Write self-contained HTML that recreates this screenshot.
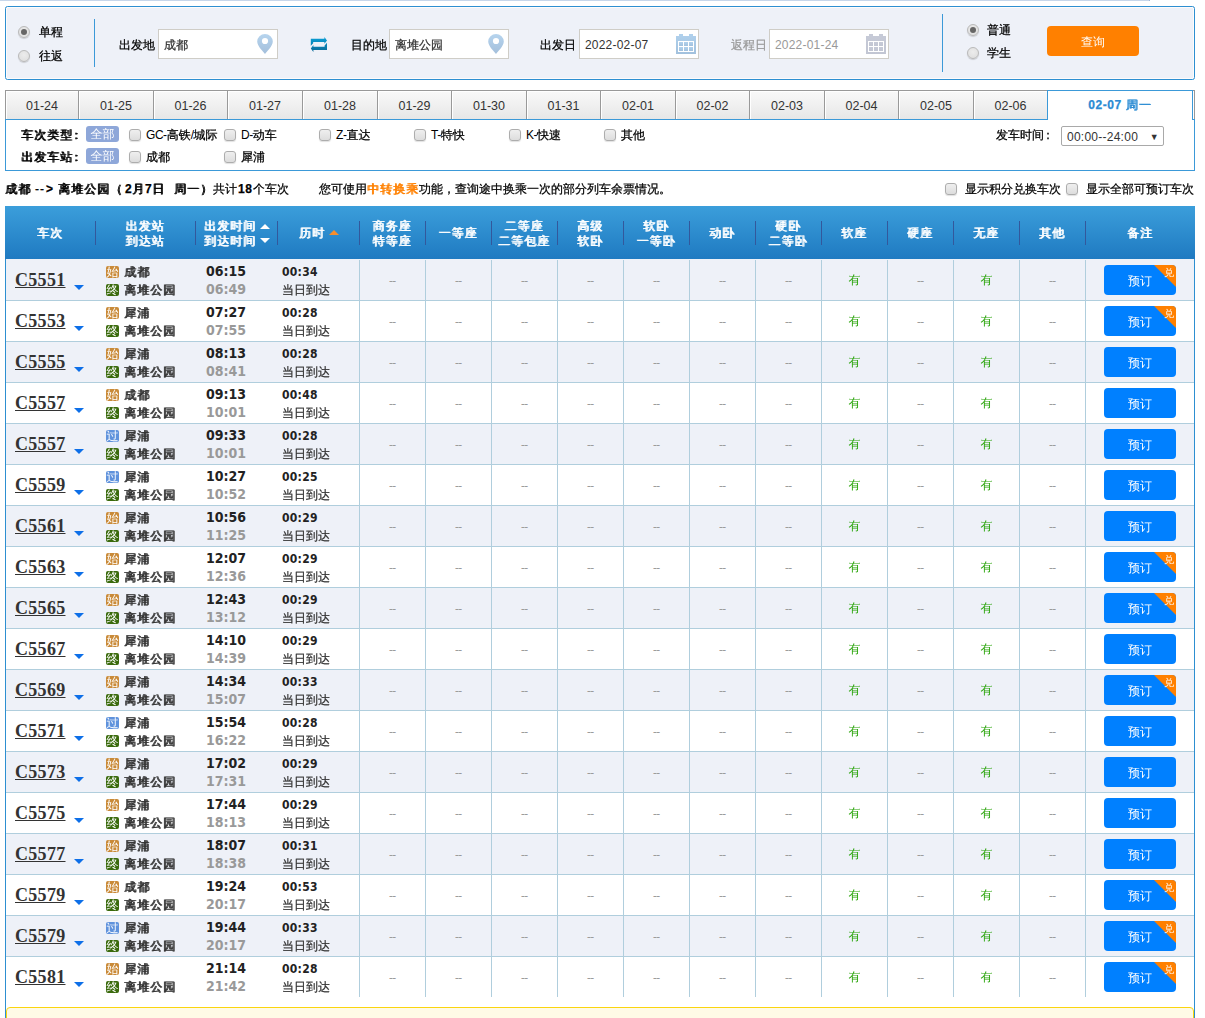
<!DOCTYPE html>
<html lang="zh-CN">
<head>
<meta charset="utf-8">
<title>车票预订</title>
<style>
*{box-sizing:border-box}
html,body{margin:0;padding:0;background:#fff}
body{width:1205px;height:1018px;overflow:hidden;position:relative;font:12px/18px "Liberation Sans","WenQuanYi Zen Hei","Noto Sans CJK SC",sans-serif;color:#000;-webkit-text-stroke:0.25px}
b,.b{font-weight:bold}
.k{font-weight:normal;text-shadow:1px 0 0 currentColor;letter-spacing:1px}
.abs{position:absolute}
.lt{letter-spacing:-.45px;-webkit-text-stroke:0}
#topstrip{left:0;top:0;width:1150px;height:1px;background:#c6d6ea;border-right:1px solid #9fb8d8}
#sbox{left:5px;top:6px;width:1190px;height:74px;border:1px solid #2d8fd1;border-radius:2.5px;background:#eef1f8;box-shadow:inset 0 0 0 1px #fdfbfb}
.vline{width:1px;background:#3b99d8}
.radio{width:12px;height:12px;border-radius:50%;border:1px solid #b9b9b9;background:radial-gradient(circle at 50% 40%,#ececec 0,#dcdcdc 100%);box-shadow:0 1px 1px rgba(0,0,0,.15)}
.radio.on::after{content:"";position:absolute;left:2px;top:2px;width:6px;height:6px;border-radius:50%;background:#666}
.inp{height:30px;width:120px;border:1px solid #cfcdc7;background:#fff;padding:0 0 0 5px;line-height:30px;color:#333}
.inp.dis{color:#999}
.lab{line-height:18px;white-space:nowrap}
#qbtn{left:1047px;top:26px;width:92px;height:30px;border-radius:4px;background:#ff8000;color:#fff;text-align:center;line-height:32px;-webkit-text-stroke:0}
.tab{top:90px;height:30px;border:1px solid #999;border-right:none;background:linear-gradient(#f9f9f9,#e7e7e7);box-shadow:inset 1px 1px 0 #fff;text-align:center;line-height:31px;font-size:12.5px;color:#333;-webkit-text-stroke:0}
#tabact{left:1047px;top:90px;width:146px;height:30px;border:1px solid #3b99d8;border-bottom:none;background:#fff;text-align:center;line-height:28px;color:#2a8bd3;text-shadow:1px 0 0 currentColor;letter-spacing:1px}
#panel{left:5px;top:119px;width:1190px;height:52px;border:1px solid #3b99d8;background:#fff}
.badge{width:33px;height:16px;border-radius:3px;background:#8ea7d9;color:#fff;text-align:center;line-height:16px;-webkit-text-stroke:0}
.cb{width:12px;height:12px;border-radius:3px;border:1px solid #adadad;background:linear-gradient(#efefef,#dddddd);box-shadow:0 1px 1px rgba(0,0,0,.12)}
.sel{left:1061px;top:126px;width:103px;height:20px;border:1px solid #a9a9a9;border-radius:2px;background:#fff;line-height:20px;padding-left:5px;color:#333;-webkit-text-stroke:0;letter-spacing:.25px}
#wrap{left:5px;top:206px;width:1190px;height:820px;border-left:1px solid #2d8fd1;border-right:1px solid #2d8fd1}
#thead{left:5px;top:206px;width:1190px;height:53px;background:linear-gradient(#3b9edb,#1f7ac1);color:#fff}
.th{position:absolute;top:1px;height:53px;display:flex;align-items:center;justify-content:center;text-align:center;line-height:15px;text-shadow:1px 0 0 currentColor;letter-spacing:1px;color:#fff}
.sep{position:absolute;top:15px;width:1px;height:24px;background:#33589c}
.up,.dn{position:absolute;width:0;height:0;border-left:5px solid transparent;border-right:5px solid transparent}
.up{border-bottom:5px solid #fff}.dn{border-top:5px solid #fff}
.row{position:absolute;left:6px;width:1188px;height:41px;border-bottom:1px solid #b0cedd}
.row.odd{background:#eef1f8}
.row.last{border-bottom:none;height:40px}
.cell{position:absolute;top:0;height:40px;width:66px;border-left:1px solid #b0cedd;text-align:center;line-height:42px;color:#999;font-size:10px}
.cell.yes{color:#26a306;font-size:12px;line-height:40px;-webkit-text-stroke:0}
.tn{position:absolute;left:9px;top:8px;letter-spacing:.3px;font:bold 18px/24px "Liberation Serif",serif;color:#333;text-decoration:underline;-webkit-text-stroke:0}
.tri{position:absolute;left:68px;top:25px;width:0;height:0;border-left:5px solid transparent;border-right:5px solid transparent;border-top:5px solid #0d6fe8}
.sb{position:absolute;left:100px;width:13px;height:12px;border-radius:2px;color:#fff;font-size:12px;line-height:12px;text-align:center;overflow:hidden;-webkit-text-stroke:0}
.sb.s{background:#c98a38}.sb.z{background:#3a6a0c}.sb.g{background:#5f92dc}
.sn{position:absolute;left:118px;text-shadow:1px 0 0 currentColor;letter-spacing:1px;line-height:18px;color:#333;white-space:nowrap}
.t1,.t2{position:absolute;left:200px;font:bold 14px/18px "DejaVu Sans Condensed","DejaVu Sans","Liberation Sans",sans-serif;color:#222;-webkit-text-stroke:0}
.t1{top:2px}.t2{top:20px;color:#999}
.d1{position:absolute;left:276px;top:3px;letter-spacing:.3px;font:bold 12px/18px "DejaVu Sans Condensed","DejaVu Sans","Liberation Sans",sans-serif;color:#222;-webkit-text-stroke:0}
.d2{position:absolute;left:276px;top:21px;line-height:18px;color:#333}
.bk{position:absolute;left:1098px;top:5px;width:72px;height:30px;border-radius:4px;background:#0080ff;color:#fff;text-align:center;line-height:33px;overflow:hidden;-webkit-text-stroke:0}
.bk i{position:absolute;right:0;top:0;width:0;height:0;border-top:22px solid #ff8000;border-left:22px solid transparent}
.bk em{position:absolute;right:2px;top:2px;font-style:normal;font-size:10px;line-height:11px;color:#fff}
#ybox{left:6px;top:1007px;width:1188px;height:40px;border:1px solid #fad50f;border-radius:4px;background:#fffae6}
</style>
</head>
<body>
<div id="topstrip" class="abs"></div>
<div id="sbox" class="abs"></div>
<div class="abs radio on" style="left:18px;top:26px"></div>
<div class="abs radio" style="left:18px;top:50px"></div>
<div class="abs lab" style="left:39px;top:23px">单程</div>
<div class="abs lab" style="left:39px;top:47px">往返</div>
<div class="abs vline" style="left:94px;top:19px;height:48px"></div>
<div class="abs lab" style="left:119px;top:36px">出发地</div>
<div class="abs inp" style="left:158px;top:29px">成都</div>
<div class="abs lab" style="left:351px;top:36px">目的地</div>
<div class="abs inp" style="left:389px;top:29px">离堆公园</div>
<div class="abs lab" style="left:540px;top:36px">出发日</div>
<div class="abs inp" style="left:579px;top:29px;-webkit-text-stroke:0;letter-spacing:.2px">2022-02-07</div>
<div class="abs lab" style="left:731px;top:36px;color:#999">返程日</div>
<div class="abs inp dis" style="left:769px;top:29px;-webkit-text-stroke:0;letter-spacing:.2px">2022-01-24</div>
<svg class="abs" style="left:257px;top:34px" width="16" height="20" viewBox="0 0 16 20"><defs><linearGradient id="pg1" x1="0" y1="0" x2="0" y2="1"><stop offset="0" stop-color="#b6d4ee"/><stop offset="1" stop-color="#a4bfdb"/></linearGradient></defs><path fill="url(#pg1)" fill-rule="evenodd" d="M8 20 C6.5 18 0.2 12.2 0.2 7.6 A7.8 7.6 0 0 1 15.8 7.6 C15.8 12.2 9.5 18 8 20 Z M8 3.9 A3.1 3.1 0 1 0 8 10.1 A3.1 3.1 0 1 0 8 3.9 Z"/></svg>
<svg class="abs" style="left:488px;top:34px" width="16" height="20" viewBox="0 0 16 20"><defs><linearGradient id="pg2" x1="0" y1="0" x2="0" y2="1"><stop offset="0" stop-color="#b6d4ee"/><stop offset="1" stop-color="#a4bfdb"/></linearGradient></defs><path fill="url(#pg2)" fill-rule="evenodd" d="M8 20 C6.5 18 0.2 12.2 0.2 7.6 A7.8 7.6 0 0 1 15.8 7.6 C15.8 12.2 9.5 18 8 20 Z M8 3.9 A3.1 3.1 0 1 0 8 10.1 A3.1 3.1 0 1 0 8 3.9 Z"/></svg>
<svg class="abs" style="left:310px;top:37px" width="18" height="15" viewBox="0 0 18 15"><defs><linearGradient id="sg" x1="0" y1="0" x2="0" y2="1"><stop offset="0" stop-color="#0aa0d8"/><stop offset="1" stop-color="#0a6996"/></linearGradient></defs><path fill="url(#sg)" d="M0.8 8.8 L0.8 1.8 L14.4 1.8 L14.4 0 L17 3.4 L14.4 6.8 L14.4 5 L3.2 5 L3.2 6.2 Z M17 5.8 L17 12.9 L3.4 12.9 L3.4 15 L0.8 11.4 L3.4 7.9 L3.4 9.8 L14.6 9.8 L14.6 8.4 Z"/></svg>
<svg class="abs" style="left:676px;top:34px" width="20" height="20" viewBox="0 0 20 20"><defs><linearGradient id="cg1" x1="0" y1="0" x2="0" y2="1"><stop offset="0" stop-color="#b0d1ed"/><stop offset="1" stop-color="#a2c1dd"/></linearGradient></defs><g fill="url(#cg1)"><path fill-rule="evenodd" d="M0 2 H3 V0 H7 V2 H13 V0 H17 V2 H20 V20 H0 Z M2 7 V18 H18 V7 Z"/><rect x="3" y="8" width="4" height="4"/><rect x="8" y="8" width="4" height="4"/><rect x="13" y="8" width="4" height="4"/><rect x="3" y="13" width="4" height="4"/><rect x="8" y="13" width="4" height="4"/><rect x="13" y="13" width="4" height="4"/></g></svg>
<svg class="abs" style="left:866px;top:34px" width="20" height="20" viewBox="0 0 20 20"><defs><linearGradient id="cg2" x1="0" y1="0" x2="0" y2="1"><stop offset="0" stop-color="#c6cad7"/><stop offset="1" stop-color="#c2c6d3"/></linearGradient></defs><g fill="url(#cg2)"><path fill-rule="evenodd" d="M0 2 H3 V0 H7 V2 H13 V0 H17 V2 H20 V20 H0 Z M2 7 V18 H18 V7 Z"/><rect x="3" y="8" width="4" height="4"/><rect x="8" y="8" width="4" height="4"/><rect x="13" y="8" width="4" height="4"/><rect x="3" y="13" width="4" height="4"/><rect x="8" y="13" width="4" height="4"/><rect x="13" y="13" width="4" height="4"/></g></svg>
<div class="abs vline" style="left:942px;top:14px;height:58px"></div>
<div class="abs radio on" style="left:967px;top:24px"></div>
<div class="abs radio" style="left:967px;top:47px"></div>
<div class="abs lab" style="left:987px;top:21px">普通</div>
<div class="abs lab" style="left:987px;top:44px">学生</div>
<div id="qbtn" class="abs">查询</div>
<div class="abs tab" style="left:5px;width:73px">01-24</div>
<div class="abs tab" style="left:78px;width:75px">01-25</div>
<div class="abs tab" style="left:153px;width:74px">01-26</div>
<div class="abs tab" style="left:227px;width:75px">01-27</div>
<div class="abs tab" style="left:302px;width:75px">01-28</div>
<div class="abs tab" style="left:377px;width:74px">01-29</div>
<div class="abs tab" style="left:451px;width:75px">01-30</div>
<div class="abs tab" style="left:526px;width:74px">01-31</div>
<div class="abs tab" style="left:600px;width:75px">02-01</div>
<div class="abs tab" style="left:675px;width:74px">02-02</div>
<div class="abs tab" style="left:749px;width:75px">02-03</div>
<div class="abs tab" style="left:824px;width:74px">02-04</div>
<div class="abs tab" style="left:898px;width:75px">02-05</div>
<div class="abs tab" style="left:973px;width:74px">02-06</div>
<div id="panel" class="abs"></div>
<div id="tabact" class="abs"><b style="text-shadow:none;letter-spacing:.6px">02-07 </b>周一</div>
<div class="abs" style="left:1193px;top:90px;width:2px;height:29px;border-top:1px solid #999;border-right:1px solid #999"></div>
<div class="abs lab k" style="left:21px;top:126px">车次类型<span style="margin-left:-3px">：</span></div>
<div class="abs lab k" style="left:21px;top:148px">出发车站<span style="margin-left:-3px">：</span></div>
<div class="abs badge" style="left:86px;top:126px">全部</div>
<div class="abs badge" style="left:86px;top:148px">全部</div>
<div class="abs cb" style="left:129px;top:129px"></div><div class="abs lab" style="left:146px;top:126px"><span class="lt">GC-</span>高铁<span class="lt">/</span>城际</div>
<div class="abs cb" style="left:224px;top:129px"></div><div class="abs lab" style="left:241px;top:126px"><span class="lt">D-</span>动车</div>
<div class="abs cb" style="left:319px;top:129px"></div><div class="abs lab" style="left:336px;top:126px"><span class="lt">Z-</span>直达</div>
<div class="abs cb" style="left:414px;top:129px"></div><div class="abs lab" style="left:431px;top:126px"><span class="lt">T-</span>特快</div>
<div class="abs cb" style="left:509px;top:129px"></div><div class="abs lab" style="left:526px;top:126px"><span class="lt">K-</span>快速</div>
<div class="abs cb" style="left:604px;top:129px"></div><div class="abs lab" style="left:621px;top:126px">其他</div>
<div class="abs cb" style="left:129px;top:151px"></div><div class="abs lab" style="left:146px;top:148px">成都</div>
<div class="abs cb" style="left:224px;top:151px"></div><div class="abs lab" style="left:241px;top:148px">犀浦</div>
<div class="abs lab" style="left:996px;top:126px">发车时间<span style="margin-left:-2px">：</span></div>
<div class="abs sel">00:00--24:00<span style="position:absolute;right:4px;top:0;font-size:9px">▼</span></div>
<div class="abs lab" style="left:0;top:180px;width:300px;height:18px"><span class="abs k" style="left:5px">成都</span><span class="abs" style="left:35px;letter-spacing:1px">--</span><b class="abs" style="left:46px">&gt;</b><span class="abs k" style="left:58px">离堆公园（</span><b class="abs" style="left:125px">2</b><span class="abs k" style="left:132px">月</span><b class="abs" style="left:145px">7</b><span class="abs k" style="left:152px">日</span><span class="abs k" style="left:174px">周一）</span><span class="abs" style="left:213px">共计</span><b class="abs" style="left:238px;letter-spacing:.5px">18</b><span class="abs" style="left:253px">个车次</span></div>
<div class="abs lab" style="left:319px;top:180px">您可使用<span class="k" style="color:#ff8000">中转换乘</span>功能，查询途中换乘一次的部分列车余票情况。</div>
<div class="abs cb" style="left:945px;top:183px"></div><div class="abs lab" style="left:965px;top:180px">显示积分兑换车次</div>
<div class="abs cb" style="left:1066px;top:183px"></div><div class="abs lab" style="left:1086px;top:180px">显示全部可预订车次</div>
<div id="wrap" class="abs"></div>
<div class="abs" style="left:6px;top:259px;width:1188px;height:1px;background:#eef1f8"></div>
<div id="thead" class="abs"><div class="th" style="left:0px;width:90px"><span>车次</span></div><div class="th" style="left:90px;width:100px"><span>出发站<br>到达站</span></div><div class="sep" style="left:90px"></div><div class="sep" style="left:190px"></div><div class="sep" style="left:272px"></div><div class="th" style="left:354px;width:66px"><span>商务座<br>特等座</span></div><div class="sep" style="left:354px"></div><div class="th" style="left:420px;width:66px"><span>一等座</span></div><div class="sep" style="left:420px"></div><div class="th" style="left:486px;width:66px"><span>二等座<br>二等包座</span></div><div class="sep" style="left:486px"></div><div class="th" style="left:552px;width:66px"><span>高级<br>软卧</span></div><div class="sep" style="left:552px"></div><div class="th" style="left:618px;width:66px"><span>软卧<br>一等卧</span></div><div class="sep" style="left:618px"></div><div class="th" style="left:684px;width:66px"><span>动卧</span></div><div class="sep" style="left:684px"></div><div class="th" style="left:750px;width:66px"><span>硬卧<br>二等卧</span></div><div class="sep" style="left:750px"></div><div class="th" style="left:816px;width:66px"><span>软座</span></div><div class="sep" style="left:816px"></div><div class="th" style="left:882px;width:66px"><span>硬座</span></div><div class="sep" style="left:882px"></div><div class="th" style="left:948px;width:66px"><span>无座</span></div><div class="sep" style="left:948px"></div><div class="th" style="left:1014px;width:66px"><span>其他</span></div><div class="sep" style="left:1014px"></div><div class="th" style="left:1080px;width:110px"><span>备注</span></div><div class="sep" style="left:1080px"></div><div class="th" style="left:199px;width:53px;justify-content:flex-start;text-align:left"><span>出发时间<br>到达时间</span></div><span class="up" style="left:255px;top:18px"></span><span class="dn" style="left:255px;top:32px"></span><div class="th" style="left:294px;width:30px;justify-content:flex-start"><span>历时</span></div><span class="up" style="left:324px;top:24px;border-bottom-color:#f78d2b"></span></div>
<div class="row odd" style="top:260px"><span class="tn">C5551</span><span class="tri"></span><span class="sb s" style="top:6px">始</span><span class="sn" style="top:3px">成都</span><span class="sb z" style="top:24px">终</span><span class="sn" style="top:21px">离堆公园</span><span class="t1">06:15</span><span class="t2">06:49</span><span class="d1">00:34</span><span class="d2">当日到达</span><span class="cell" style="left:353px">--</span><span class="cell" style="left:419px">--</span><span class="cell" style="left:485px">--</span><span class="cell" style="left:551px">--</span><span class="cell" style="left:617px">--</span><span class="cell" style="left:683px">--</span><span class="cell" style="left:749px">--</span><span class="cell yes" style="left:815px">有</span><span class="cell" style="left:881px">--</span><span class="cell yes" style="left:947px">有</span><span class="cell" style="left:1013px">--</span><span class="cell" style="left:1079px;width:1px"></span><span class="bk">预订<i></i><em>兑</em></span></div>
<div class="row" style="top:301px"><span class="tn">C5553</span><span class="tri"></span><span class="sb s" style="top:6px">始</span><span class="sn" style="top:3px">犀浦</span><span class="sb z" style="top:24px">终</span><span class="sn" style="top:21px">离堆公园</span><span class="t1">07:27</span><span class="t2">07:55</span><span class="d1">00:28</span><span class="d2">当日到达</span><span class="cell" style="left:353px">--</span><span class="cell" style="left:419px">--</span><span class="cell" style="left:485px">--</span><span class="cell" style="left:551px">--</span><span class="cell" style="left:617px">--</span><span class="cell" style="left:683px">--</span><span class="cell" style="left:749px">--</span><span class="cell yes" style="left:815px">有</span><span class="cell" style="left:881px">--</span><span class="cell yes" style="left:947px">有</span><span class="cell" style="left:1013px">--</span><span class="cell" style="left:1079px;width:1px"></span><span class="bk">预订<i></i><em>兑</em></span></div>
<div class="row odd" style="top:342px"><span class="tn">C5555</span><span class="tri"></span><span class="sb s" style="top:6px">始</span><span class="sn" style="top:3px">犀浦</span><span class="sb z" style="top:24px">终</span><span class="sn" style="top:21px">离堆公园</span><span class="t1">08:13</span><span class="t2">08:41</span><span class="d1">00:28</span><span class="d2">当日到达</span><span class="cell" style="left:353px">--</span><span class="cell" style="left:419px">--</span><span class="cell" style="left:485px">--</span><span class="cell" style="left:551px">--</span><span class="cell" style="left:617px">--</span><span class="cell" style="left:683px">--</span><span class="cell" style="left:749px">--</span><span class="cell yes" style="left:815px">有</span><span class="cell" style="left:881px">--</span><span class="cell yes" style="left:947px">有</span><span class="cell" style="left:1013px">--</span><span class="cell" style="left:1079px;width:1px"></span><span class="bk">预订</span></div>
<div class="row" style="top:383px"><span class="tn">C5557</span><span class="tri"></span><span class="sb s" style="top:6px">始</span><span class="sn" style="top:3px">成都</span><span class="sb z" style="top:24px">终</span><span class="sn" style="top:21px">离堆公园</span><span class="t1">09:13</span><span class="t2">10:01</span><span class="d1">00:48</span><span class="d2">当日到达</span><span class="cell" style="left:353px">--</span><span class="cell" style="left:419px">--</span><span class="cell" style="left:485px">--</span><span class="cell" style="left:551px">--</span><span class="cell" style="left:617px">--</span><span class="cell" style="left:683px">--</span><span class="cell" style="left:749px">--</span><span class="cell yes" style="left:815px">有</span><span class="cell" style="left:881px">--</span><span class="cell yes" style="left:947px">有</span><span class="cell" style="left:1013px">--</span><span class="cell" style="left:1079px;width:1px"></span><span class="bk">预订</span></div>
<div class="row odd" style="top:424px"><span class="tn">C5557</span><span class="tri"></span><span class="sb g" style="top:6px">过</span><span class="sn" style="top:3px">犀浦</span><span class="sb z" style="top:24px">终</span><span class="sn" style="top:21px">离堆公园</span><span class="t1">09:33</span><span class="t2">10:01</span><span class="d1">00:28</span><span class="d2">当日到达</span><span class="cell" style="left:353px">--</span><span class="cell" style="left:419px">--</span><span class="cell" style="left:485px">--</span><span class="cell" style="left:551px">--</span><span class="cell" style="left:617px">--</span><span class="cell" style="left:683px">--</span><span class="cell" style="left:749px">--</span><span class="cell yes" style="left:815px">有</span><span class="cell" style="left:881px">--</span><span class="cell yes" style="left:947px">有</span><span class="cell" style="left:1013px">--</span><span class="cell" style="left:1079px;width:1px"></span><span class="bk">预订</span></div>
<div class="row" style="top:465px"><span class="tn">C5559</span><span class="tri"></span><span class="sb g" style="top:6px">过</span><span class="sn" style="top:3px">犀浦</span><span class="sb z" style="top:24px">终</span><span class="sn" style="top:21px">离堆公园</span><span class="t1">10:27</span><span class="t2">10:52</span><span class="d1">00:25</span><span class="d2">当日到达</span><span class="cell" style="left:353px">--</span><span class="cell" style="left:419px">--</span><span class="cell" style="left:485px">--</span><span class="cell" style="left:551px">--</span><span class="cell" style="left:617px">--</span><span class="cell" style="left:683px">--</span><span class="cell" style="left:749px">--</span><span class="cell yes" style="left:815px">有</span><span class="cell" style="left:881px">--</span><span class="cell yes" style="left:947px">有</span><span class="cell" style="left:1013px">--</span><span class="cell" style="left:1079px;width:1px"></span><span class="bk">预订</span></div>
<div class="row odd" style="top:506px"><span class="tn">C5561</span><span class="tri"></span><span class="sb s" style="top:6px">始</span><span class="sn" style="top:3px">犀浦</span><span class="sb z" style="top:24px">终</span><span class="sn" style="top:21px">离堆公园</span><span class="t1">10:56</span><span class="t2">11:25</span><span class="d1">00:29</span><span class="d2">当日到达</span><span class="cell" style="left:353px">--</span><span class="cell" style="left:419px">--</span><span class="cell" style="left:485px">--</span><span class="cell" style="left:551px">--</span><span class="cell" style="left:617px">--</span><span class="cell" style="left:683px">--</span><span class="cell" style="left:749px">--</span><span class="cell yes" style="left:815px">有</span><span class="cell" style="left:881px">--</span><span class="cell yes" style="left:947px">有</span><span class="cell" style="left:1013px">--</span><span class="cell" style="left:1079px;width:1px"></span><span class="bk">预订</span></div>
<div class="row" style="top:547px"><span class="tn">C5563</span><span class="tri"></span><span class="sb s" style="top:6px">始</span><span class="sn" style="top:3px">犀浦</span><span class="sb z" style="top:24px">终</span><span class="sn" style="top:21px">离堆公园</span><span class="t1">12:07</span><span class="t2">12:36</span><span class="d1">00:29</span><span class="d2">当日到达</span><span class="cell" style="left:353px">--</span><span class="cell" style="left:419px">--</span><span class="cell" style="left:485px">--</span><span class="cell" style="left:551px">--</span><span class="cell" style="left:617px">--</span><span class="cell" style="left:683px">--</span><span class="cell" style="left:749px">--</span><span class="cell yes" style="left:815px">有</span><span class="cell" style="left:881px">--</span><span class="cell yes" style="left:947px">有</span><span class="cell" style="left:1013px">--</span><span class="cell" style="left:1079px;width:1px"></span><span class="bk">预订<i></i><em>兑</em></span></div>
<div class="row odd" style="top:588px"><span class="tn">C5565</span><span class="tri"></span><span class="sb s" style="top:6px">始</span><span class="sn" style="top:3px">犀浦</span><span class="sb z" style="top:24px">终</span><span class="sn" style="top:21px">离堆公园</span><span class="t1">12:43</span><span class="t2">13:12</span><span class="d1">00:29</span><span class="d2">当日到达</span><span class="cell" style="left:353px">--</span><span class="cell" style="left:419px">--</span><span class="cell" style="left:485px">--</span><span class="cell" style="left:551px">--</span><span class="cell" style="left:617px">--</span><span class="cell" style="left:683px">--</span><span class="cell" style="left:749px">--</span><span class="cell yes" style="left:815px">有</span><span class="cell" style="left:881px">--</span><span class="cell yes" style="left:947px">有</span><span class="cell" style="left:1013px">--</span><span class="cell" style="left:1079px;width:1px"></span><span class="bk">预订<i></i><em>兑</em></span></div>
<div class="row" style="top:629px"><span class="tn">C5567</span><span class="tri"></span><span class="sb s" style="top:6px">始</span><span class="sn" style="top:3px">犀浦</span><span class="sb z" style="top:24px">终</span><span class="sn" style="top:21px">离堆公园</span><span class="t1">14:10</span><span class="t2">14:39</span><span class="d1">00:29</span><span class="d2">当日到达</span><span class="cell" style="left:353px">--</span><span class="cell" style="left:419px">--</span><span class="cell" style="left:485px">--</span><span class="cell" style="left:551px">--</span><span class="cell" style="left:617px">--</span><span class="cell" style="left:683px">--</span><span class="cell" style="left:749px">--</span><span class="cell yes" style="left:815px">有</span><span class="cell" style="left:881px">--</span><span class="cell yes" style="left:947px">有</span><span class="cell" style="left:1013px">--</span><span class="cell" style="left:1079px;width:1px"></span><span class="bk">预订</span></div>
<div class="row odd" style="top:670px"><span class="tn">C5569</span><span class="tri"></span><span class="sb s" style="top:6px">始</span><span class="sn" style="top:3px">犀浦</span><span class="sb z" style="top:24px">终</span><span class="sn" style="top:21px">离堆公园</span><span class="t1">14:34</span><span class="t2">15:07</span><span class="d1">00:33</span><span class="d2">当日到达</span><span class="cell" style="left:353px">--</span><span class="cell" style="left:419px">--</span><span class="cell" style="left:485px">--</span><span class="cell" style="left:551px">--</span><span class="cell" style="left:617px">--</span><span class="cell" style="left:683px">--</span><span class="cell" style="left:749px">--</span><span class="cell yes" style="left:815px">有</span><span class="cell" style="left:881px">--</span><span class="cell yes" style="left:947px">有</span><span class="cell" style="left:1013px">--</span><span class="cell" style="left:1079px;width:1px"></span><span class="bk">预订<i></i><em>兑</em></span></div>
<div class="row" style="top:711px"><span class="tn">C5571</span><span class="tri"></span><span class="sb g" style="top:6px">过</span><span class="sn" style="top:3px">犀浦</span><span class="sb z" style="top:24px">终</span><span class="sn" style="top:21px">离堆公园</span><span class="t1">15:54</span><span class="t2">16:22</span><span class="d1">00:28</span><span class="d2">当日到达</span><span class="cell" style="left:353px">--</span><span class="cell" style="left:419px">--</span><span class="cell" style="left:485px">--</span><span class="cell" style="left:551px">--</span><span class="cell" style="left:617px">--</span><span class="cell" style="left:683px">--</span><span class="cell" style="left:749px">--</span><span class="cell yes" style="left:815px">有</span><span class="cell" style="left:881px">--</span><span class="cell yes" style="left:947px">有</span><span class="cell" style="left:1013px">--</span><span class="cell" style="left:1079px;width:1px"></span><span class="bk">预订</span></div>
<div class="row odd" style="top:752px"><span class="tn">C5573</span><span class="tri"></span><span class="sb s" style="top:6px">始</span><span class="sn" style="top:3px">犀浦</span><span class="sb z" style="top:24px">终</span><span class="sn" style="top:21px">离堆公园</span><span class="t1">17:02</span><span class="t2">17:31</span><span class="d1">00:29</span><span class="d2">当日到达</span><span class="cell" style="left:353px">--</span><span class="cell" style="left:419px">--</span><span class="cell" style="left:485px">--</span><span class="cell" style="left:551px">--</span><span class="cell" style="left:617px">--</span><span class="cell" style="left:683px">--</span><span class="cell" style="left:749px">--</span><span class="cell yes" style="left:815px">有</span><span class="cell" style="left:881px">--</span><span class="cell yes" style="left:947px">有</span><span class="cell" style="left:1013px">--</span><span class="cell" style="left:1079px;width:1px"></span><span class="bk">预订</span></div>
<div class="row" style="top:793px"><span class="tn">C5575</span><span class="tri"></span><span class="sb s" style="top:6px">始</span><span class="sn" style="top:3px">犀浦</span><span class="sb z" style="top:24px">终</span><span class="sn" style="top:21px">离堆公园</span><span class="t1">17:44</span><span class="t2">18:13</span><span class="d1">00:29</span><span class="d2">当日到达</span><span class="cell" style="left:353px">--</span><span class="cell" style="left:419px">--</span><span class="cell" style="left:485px">--</span><span class="cell" style="left:551px">--</span><span class="cell" style="left:617px">--</span><span class="cell" style="left:683px">--</span><span class="cell" style="left:749px">--</span><span class="cell yes" style="left:815px">有</span><span class="cell" style="left:881px">--</span><span class="cell yes" style="left:947px">有</span><span class="cell" style="left:1013px">--</span><span class="cell" style="left:1079px;width:1px"></span><span class="bk">预订</span></div>
<div class="row odd" style="top:834px"><span class="tn">C5577</span><span class="tri"></span><span class="sb s" style="top:6px">始</span><span class="sn" style="top:3px">犀浦</span><span class="sb z" style="top:24px">终</span><span class="sn" style="top:21px">离堆公园</span><span class="t1">18:07</span><span class="t2">18:38</span><span class="d1">00:31</span><span class="d2">当日到达</span><span class="cell" style="left:353px">--</span><span class="cell" style="left:419px">--</span><span class="cell" style="left:485px">--</span><span class="cell" style="left:551px">--</span><span class="cell" style="left:617px">--</span><span class="cell" style="left:683px">--</span><span class="cell" style="left:749px">--</span><span class="cell yes" style="left:815px">有</span><span class="cell" style="left:881px">--</span><span class="cell yes" style="left:947px">有</span><span class="cell" style="left:1013px">--</span><span class="cell" style="left:1079px;width:1px"></span><span class="bk">预订</span></div>
<div class="row" style="top:875px"><span class="tn">C5579</span><span class="tri"></span><span class="sb s" style="top:6px">始</span><span class="sn" style="top:3px">成都</span><span class="sb z" style="top:24px">终</span><span class="sn" style="top:21px">离堆公园</span><span class="t1">19:24</span><span class="t2">20:17</span><span class="d1">00:53</span><span class="d2">当日到达</span><span class="cell" style="left:353px">--</span><span class="cell" style="left:419px">--</span><span class="cell" style="left:485px">--</span><span class="cell" style="left:551px">--</span><span class="cell" style="left:617px">--</span><span class="cell" style="left:683px">--</span><span class="cell" style="left:749px">--</span><span class="cell yes" style="left:815px">有</span><span class="cell" style="left:881px">--</span><span class="cell yes" style="left:947px">有</span><span class="cell" style="left:1013px">--</span><span class="cell" style="left:1079px;width:1px"></span><span class="bk">预订<i></i><em>兑</em></span></div>
<div class="row odd" style="top:916px"><span class="tn">C5579</span><span class="tri"></span><span class="sb g" style="top:6px">过</span><span class="sn" style="top:3px">犀浦</span><span class="sb z" style="top:24px">终</span><span class="sn" style="top:21px">离堆公园</span><span class="t1">19:44</span><span class="t2">20:17</span><span class="d1">00:33</span><span class="d2">当日到达</span><span class="cell" style="left:353px">--</span><span class="cell" style="left:419px">--</span><span class="cell" style="left:485px">--</span><span class="cell" style="left:551px">--</span><span class="cell" style="left:617px">--</span><span class="cell" style="left:683px">--</span><span class="cell" style="left:749px">--</span><span class="cell yes" style="left:815px">有</span><span class="cell" style="left:881px">--</span><span class="cell yes" style="left:947px">有</span><span class="cell" style="left:1013px">--</span><span class="cell" style="left:1079px;width:1px"></span><span class="bk">预订<i></i><em>兑</em></span></div>
<div class="row last" style="top:957px"><span class="tn">C5581</span><span class="tri"></span><span class="sb s" style="top:6px">始</span><span class="sn" style="top:3px">犀浦</span><span class="sb z" style="top:24px">终</span><span class="sn" style="top:21px">离堆公园</span><span class="t1">21:14</span><span class="t2">21:42</span><span class="d1">00:28</span><span class="d2">当日到达</span><span class="cell" style="left:353px">--</span><span class="cell" style="left:419px">--</span><span class="cell" style="left:485px">--</span><span class="cell" style="left:551px">--</span><span class="cell" style="left:617px">--</span><span class="cell" style="left:683px">--</span><span class="cell" style="left:749px">--</span><span class="cell yes" style="left:815px">有</span><span class="cell" style="left:881px">--</span><span class="cell yes" style="left:947px">有</span><span class="cell" style="left:1013px">--</span><span class="cell" style="left:1079px;width:1px"></span><span class="bk">预订<i></i><em>兑</em></span></div>
<div id="ybox" class="abs"></div>
</body>
</html>
